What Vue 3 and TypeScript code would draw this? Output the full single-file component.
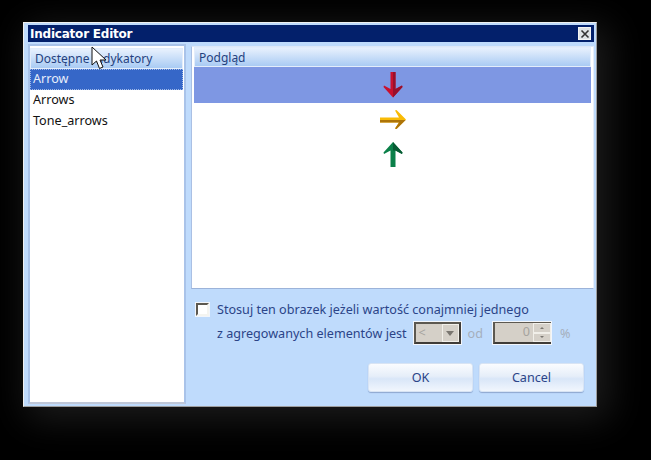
<script setup lang="ts">
const lists: string[] = ['Arrow', 'Arrows', 'Tone_arrows']
</script>

<template>
  <div class="page">
    <div class="window">
      <div class="titlebar">
        <span class="title">Indicator Editor</span>
        <span class="close">
          <svg width="10" height="10" viewBox="0 0 10 10"><path d="M1.500 1.500l7 7M8.500 1.500l-7 7" stroke="#333" stroke-width="1.600" fill="none" /></svg>
        </span>
      </div>
      <div class="content">
        <div class="left">
          <div class="head lefthead">Dostępne indykatory</div>
          <div v-for="(n, i) in lists" :key="n" class="item" :class="{ sel: i === 0 }">{{ n }}</div>
        </div>
        <div class="right">
          <div class="preview">
            <div class="head righthead">Podgląd</div>
            <div class="row rowsel">
              <svg width="20" height="26" viewBox="0 0 20 26">
                <path d="M7.500 0h5v17L19 13.500l.5 1.500-9.500 10.500L.5 15l.5-1.500L7.500 17z" fill="#c9102e" />
                <path d="M10 0h2.500v17L19 13.500l.5 1.500-9.500 10.500z" fill="#97102c" />
              </svg>
            </div>
            <div class="row">
              <svg width="26" height="20" viewBox="0 0 26 20">
                <path d="M0 7.500h19L15 .5l1.500-.5L26 9.500 16.500 19l-1.500-.5 4-6H0z" fill="#f9bb06" />
                <path d="M0 10h25.700L16.500 19l-1.500-.5 4-6H0z" fill="#ad7409" />
              </svg>
            </div>
            <div class="row">
              <svg width="20" height="26" viewBox="0 0 20 26">
                <path d="M10 0l9.500 10.500-.5 1.500-6.500-3.500V25h-5V8.500L1 12l-.5-1.500z" fill="#0b8049" />
                <path d="M10 0l9.500 10.500-.5 1.500-6.500-3.500H10z" fill="#075a33" />
              </svg>
            </div>
          </div>
          <div class="options">
            <div class="line1">
              <span class="check"></span>
              <span>Stosuj ten obrazek jeżeli wartość conajmniej jednego</span>
            </div>
            <div class="line2">
              <span>z agregowanych elementów jest</span>
              <span class="combo">
                <span class="val">&lt;</span>
                <span class="drop"><i></i></span>
              </span>
              <span class="dim">od</span>
              <span class="spin">
                <span class="num">0</span>
                <span class="btns"><b><i class="up"></i></b><b><i class="down"></i></b></span>
              </span>
              <span class="dim pct">%</span>
            </div>
          </div>
          <div class="buttons">
            <button class="btn" type="button">OK</button>
            <button class="btn" type="button">Cancel</button>
          </div>
        </div>
      </div>
    </div>
    <svg class="cursor" width="18" height="26" viewBox="0 0 18 26">
      <path d="M1 1v18l4.500-4 3 7.500 3.500-1.500-3-7h6z" fill="#fff" stroke="#111" stroke-width="1" />
    </svg>
  </div>
</template>

<style>
html, body { margin: 0; background: #000; }
</style>

<style scoped>
.page {
  position: relative;
  width: 651px;
  height: 460px;
  box-sizing: border-box;
  padding: 22px 54px 53px 23px;
  background: #000;
  overflow: hidden;
  font-family: "Noto Sans", "Open Sans", sans-serif;
  font-size: 12.6px;
}
.window {
  height: 385px;
  box-sizing: border-box;
  background: #bfdbfc;
  border: 1px solid #f0f0ee;
  border-right-color: #9d9d9d;
  border-bottom-color: #9d9d9d;
  padding: 2px 2px 2px 4px;
  display: flex;
  flex-direction: column;
  box-shadow: 8px 8px 34px 4px #1c1c1c;
}
.titlebar {
  height: 17px;
  background: #03206b;
  display: flex;
  align-items: center;
  justify-content: space-between;
  padding: 0 3px 0 2px;
  flex: none;
}
.title {
  color: #fff;
  font-family: "DejaVu Sans", sans-serif;
  font-weight: 700;
  font-size: 12px;
  letter-spacing: -0.22px;
}
.close {
  width: 11px;
  height: 11px;
  background: #dfe3e6;
  border: 1px solid #f4f4f4;
  display: flex;
  align-items: center;
  justify-content: center;
}
.content {
  flex: 1;
  display: flex;
  gap: 5px;
  padding-top: 2px;
  min-height: 0;
}
.left {
  width: 158px;
  box-sizing: border-box;
  background: #fff;
  border: 2px solid #a9c3e9;
  border-bottom-color: #bfc7d8;
  padding: 2px 1px 2px 0;
}
.head {
  height: 21px;
  color: #24417e;
  box-sizing: border-box;
  background: linear-gradient(#e8f1fd, #a9cbf4);
  border: 1px solid #e3edfb;
  line-height: 19px;
  font-size: 12px;
}
.lefthead { padding-left: 4px; }
.righthead { padding-left: 4px; height: 20px; line-height: 19px; }
.item {
  height: 21px;
  line-height: 20px;
  padding-left: 3px;
  color: #111;
}
.item.sel {
  background: #3667c8;
  color: #e8eefb;
  outline: 1px dotted #9fb9e8;
  outline-offset: -1px;
}
.right {
  flex: 1;
  display: flex;
  flex-direction: column;
  min-width: 0;
}
.preview {
  margin-top: 2px;
  height: 243px;
  box-sizing: border-box;
  background: #fff;
  border: 1px solid;
  border-color: #dfe9f7 #e7eef9 #9cb3d9 #aac0e4;
  padding: 0 2px;
  flex: none;
}
.row {
  height: 34.500px;
  display: flex;
  align-items: center;
  justify-content: center;
}
.rowsel { height: 36px; background: #7e97e3; }
.options {
  padding: 10px 0 0 5px;
  color: #2b4488;
}
.line1 {
  display: flex;
  align-items: center;
  height: 21px;
}
.check {
  width: 13px;
  height: 13px;
  box-sizing: border-box;
  background: #fff;
  border: 2px solid;
  border-color: #5c5850 #f4f4f0 #f4f4f0 #5c5850;
  margin-right: 8px;
  outline: 1px solid #f1f5fb;
}
.line2 {
  display: flex;
  align-items: center;
  height: 24px;
  margin-top: 1px;
  padding-left: 21px;
}
.combo, .spin {
  display: flex;
  height: 22px;
  box-sizing: border-box;
  background: #d5d0c8;
  border: 2px solid;
  border-color: #5c5850 #3f3c38 #3f3c38 #5c5850;
  outline: 1px solid #f3f6fb;
  color: #a5a39e;
}
.combo { width: 47px; margin-left: 7px; justify-content: space-between; }
.val { padding-left: 3px; line-height: 17px; }
.drop {
  width: 17px;
  background: #d5d0c8;
  border: 1px solid #f1efe9;
  box-sizing: border-box;
  display: flex;
  align-items: center;
  justify-content: center;
}
.drop i {
  border: 4px solid transparent;
  border-top: 5px solid #7a7670;
  border-bottom: 0;
}
.dim { color: #a5afbc; margin-left: 7px; }
.spin { width: 58px; margin-left: 10px; justify-content: flex-end; border-right: 0; border-top-width: 1px; }
.num { padding-right: 3px; line-height: 18px; }
.btns { width: 18px; display: flex; flex-direction: column; }
.btns b {
  flex: 1;
  border: 1px solid #f1efe9;
  display: flex;
  align-items: center;
  justify-content: center;
}
.up { border: 2px solid transparent; border-bottom: 2px solid #7a7670; border-top: 0; }
.down { border: 2px solid transparent; border-top: 2px solid #7a7670; border-bottom: 0; }
.pct { margin-left: 9px; }
.buttons {
  display: flex;
  justify-content: flex-end;
  gap: 6px;
  padding-right: 10px;
  margin-top: 18px;
}
.btn {
  width: 105px;
  height: 29px;
  padding: 0;
  border: 1px solid #d8e4f4;
  border-radius: 3px;
  background: linear-gradient(#fafcff, #e6eef9 45%, #d9e6f8 55%, #f1f6fd);
  box-shadow: 0 1px 1px #8ea7cf;
  color: #2b4488;
  font: inherit;
}
.cursor {
  position: absolute;
  left: 91px;
  top: 46px;
}
</style>
